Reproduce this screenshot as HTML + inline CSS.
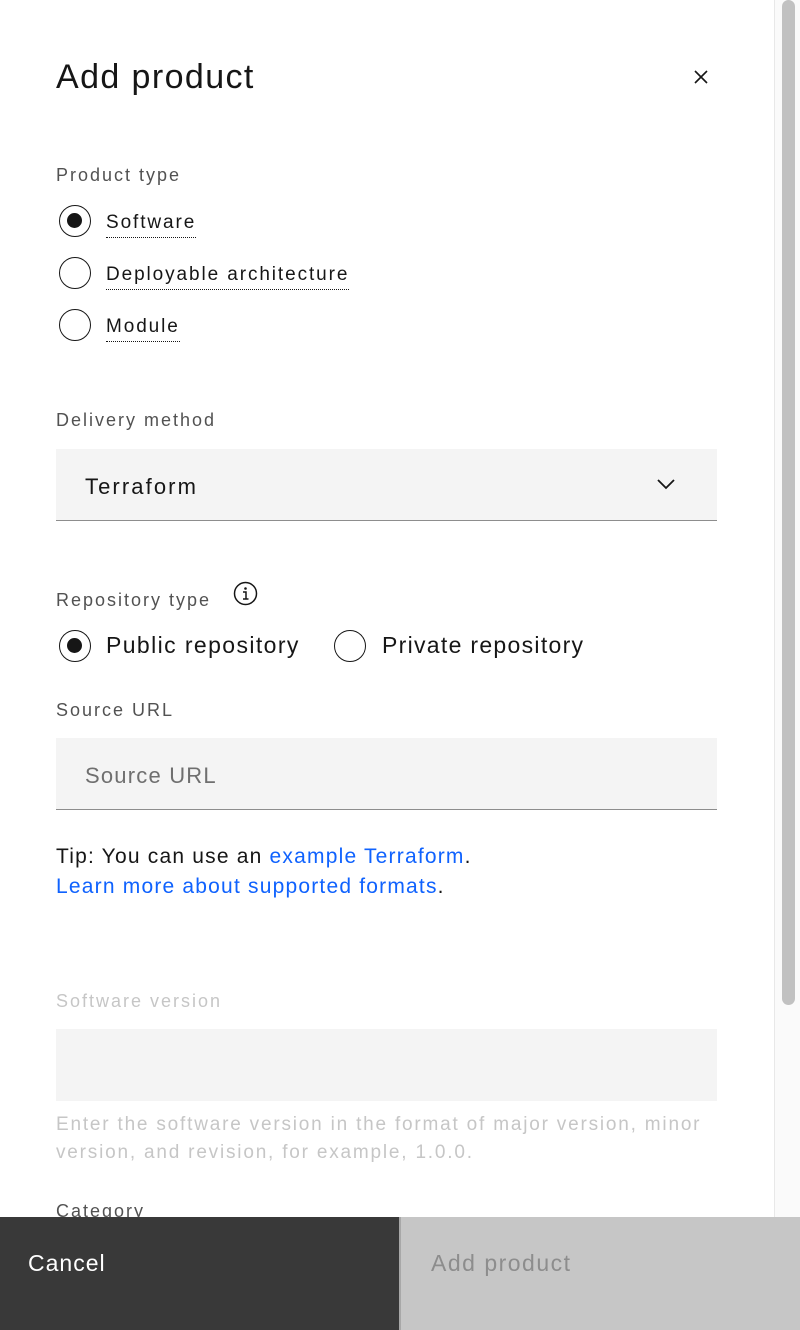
<!DOCTYPE html>
<html><head><style>
*{margin:0;padding:0;box-sizing:border-box}
body{width:800px;height:1330px;overflow:hidden;background:#fff;font-family:"Liberation Sans",sans-serif;color:#161616;position:relative}
.a{position:absolute;white-space:nowrap}
.lbl{font-size:18px;color:#525252;letter-spacing:2px}
.radio{position:absolute;width:32px;height:32px;border:1.5px solid #161616;border-radius:50%}
.radio.on::after{content:"";position:absolute;left:7px;top:7px;width:15px;height:15px;border-radius:50%;background:#161616}
.opt{font-size:19px;letter-spacing:1.9px}
.dot{border-bottom:1px dotted #161616;padding-bottom:3px}
.field{position:absolute;left:56px;width:661px;background:#f4f4f4;border-bottom:1px solid #8d8d8d}
a{color:#0f62fe;text-decoration:none}
</style></head><body>
<div class="a" style="left:56px;top:58px;font-size:34px;letter-spacing:1.4px">Add product</div>
<svg class="a" style="left:693px;top:69px" width="16" height="16" viewBox="0 0 16 16"><path d="M2 2L14 14M14 2L2 14" stroke="#161616" stroke-width="1.6"/></svg>

<div class="a lbl" style="left:56px;top:165px">Product type</div>
<div class="radio on" style="left:59px;top:205px"></div>
<div class="a opt dot" style="left:106px;top:212px">Software</div>
<div class="radio" style="left:59px;top:257px"></div>
<div class="a opt dot" style="left:106px;top:264px">Deployable architecture</div>
<div class="radio" style="left:59px;top:309px"></div>
<div class="a opt dot" style="left:106px;top:316px">Module</div>

<div class="a lbl" style="left:56px;top:410px">Delivery method</div>
<div class="field" style="top:449px;height:72px"></div>
<div class="a" style="left:85px;top:474px;font-size:22px;letter-spacing:2.1px">Terraform</div>
<svg class="a" style="left:656px;top:477px" width="20" height="14" viewBox="0 0 20 14"><path d="M2 3L10 11L18 3" fill="none" stroke="#161616" stroke-width="1.8"/></svg>

<div class="a lbl" style="left:56px;top:590px">Repository type</div>
<svg class="a" style="left:233px;top:581px" width="25" height="25" viewBox="0 0 25 25"><circle cx="12.5" cy="12.5" r="11" fill="none" stroke="#161616" stroke-width="1.5"/><circle cx="12.5" cy="7.5" r="1.3" fill="#161616"/><path d="M10 11h3v7M10 18h5.5" fill="none" stroke="#161616" stroke-width="1.5"/></svg>
<div class="radio on" style="left:59px;top:630px"></div>
<div class="a" style="left:106px;top:632px;font-size:23px;letter-spacing:1.4px">Public repository</div>
<div class="radio" style="left:334px;top:630px"></div>
<div class="a" style="left:382px;top:632px;font-size:23px;letter-spacing:1.3px">Private repository</div>

<div class="a lbl" style="left:56px;top:700px">Source URL</div>
<div class="field" style="top:738px;height:72px"></div>
<div class="a" style="left:85px;top:763px;font-size:22px;color:#6f6f6f;letter-spacing:1.2px">Source URL</div>

<div class="a" style="left:56px;top:842px;font-size:21px;line-height:30px;letter-spacing:1.2px">Tip: You can use an <a>example Terraform</a>.<br><a>Learn more about supported formats</a>.</div>

<div class="a lbl" style="left:56px;top:991px;color:#c6c6c6">Software version</div>
<div class="a" style="left:56px;top:1029px;width:661px;height:72px;background:#f4f4f4"></div>
<div class="a" style="left:56px;top:1111px;font-size:19px;line-height:28px;color:#c6c6c6;letter-spacing:1.8px">Enter the software version in the format of major version, minor<br>version, and revision, for example, 1.0.0.</div>
<div class="a lbl" style="left:56px;top:1201px">Category</div>

<div class="a" style="left:774px;top:0;width:26px;height:1217px;background:#fafafa;border-left:1px solid #e8e8e8"></div>
<div class="a" style="left:782px;top:0;width:13px;height:1005px;background:#c1c1c1;border-radius:7px"></div>

<div class="a" style="left:0;top:1217px;width:399px;height:113px;background:#393939"></div>
<div class="a" style="left:28px;top:1250px;font-size:23px;color:#fff;letter-spacing:1px">Cancel</div>
<div class="a" style="left:399px;top:1217px;width:401px;height:113px;background:#c6c6c6;border-left:2px solid #a8a8a8"></div>
<div class="a" style="left:431px;top:1250px;font-size:23px;color:#8d8d8d;letter-spacing:1.5px">Add product</div>
</body></html>
